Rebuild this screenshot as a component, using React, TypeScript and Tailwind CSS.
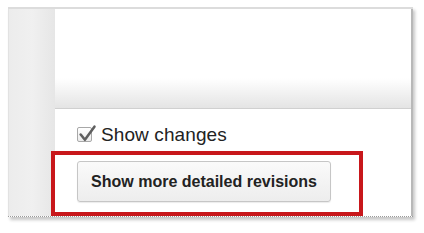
export default function App() {
  return (
    <div className="relative w-[424px] h-[233px] bg-white overflow-hidden font-['Liberation_Sans',Arial,sans-serif] text-[#222]">
      {/* captured window */}
      <div className="ml-[8px] mt-[7px] w-[405px] h-[210px] flex border-t-2 border-[#dcdcdc] border-b border-b-[#9a9a9a] border-dotted shadow-[2px_3px_3px_rgba(0,0,0,0.22)]" style={{ borderTopStyle: "solid" }}>
        <div className="w-[47px] bg-gradient-to-r from-[#ececec] via-[#f0f0f0] to-[#e6e6e6] border-l border-[#e2e2e2]" />
        <div className="flex-1 flex flex-col border-r-2 border-[#b8b8b8] bg-white">
          <div className="h-[100px] bg-gradient-to-b from-white from-70% to-[#e4e4e4] border-b border-[#d0d0d0]" />
          <div className="flex-1 pl-[22px] pt-[17px]">
            <label className="flex items-center h-[16px] gap-[9px]">
              <span className="relative w-[15px] h-[15px] rounded-[2px] border border-[#a8a8a8] bg-gradient-to-b from-white to-[#ececec]">
                <svg viewBox="0 0 18 18" className="absolute -left-[1px] -top-[4px] w-[19px] h-[19px]">
                  <path d="M3.5 10 L7.5 15 L16.5 2.5" fill="none" stroke="#5f5f5f" strokeWidth="2.4" strokeLinecap="round" strokeLinejoin="round" />
                </svg>
              </span>
              <span className="text-[19px] leading-none tracking-[0.1px]">Show changes</span>
            </label>
            <button className="mt-[19px] w-[254px] h-[41px] rounded-[3px] border border-[#c6c6c6] bg-gradient-to-b from-[#fafafa] to-[#ededed] shadow-[0_1px_1px_rgba(0,0,0,0.08)] text-[16px] font-bold text-[#222]">
              Show more detailed revisions
            </button>
          </div>
        </div>
      </div>
      {/* annotation */}
      <div className="absolute left-[51px] top-[151px] w-[312px] h-[65px] border-4 border-[#c8171b]" />
    </div>
  )
}
